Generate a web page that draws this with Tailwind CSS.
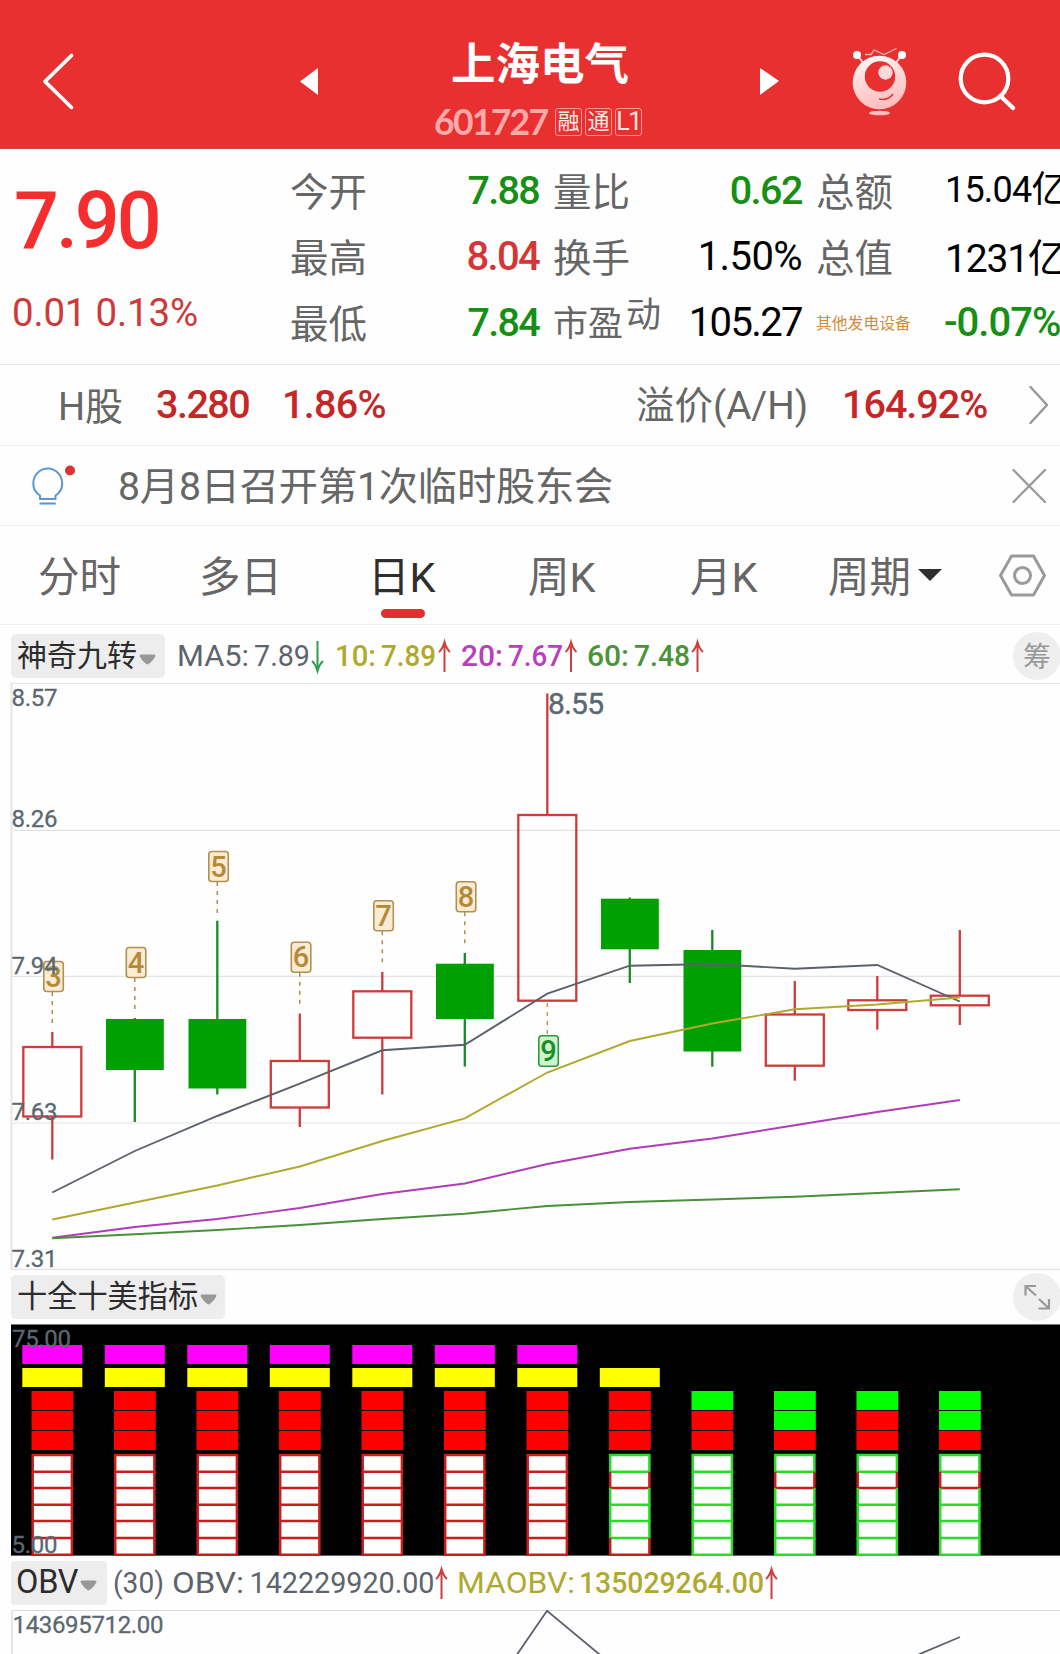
<!DOCTYPE html>
<html lang="zh-CN">
<head>
<meta charset="utf-8">
<title>上海电气 601727</title>
<script src="https://cdn.jsdelivr.net/npm/@tailwindcss/browser@4"></script>
</head>
<body class="w-[1060px] h-[1654px] overflow-hidden bg-[#fefefe] font-[Roboto,'Noto_Sans_CJK_SC',sans-serif] leading-none whitespace-nowrap text-[#666]">

<!-- Header -->
<header class="flex h-[149px] bg-[#e83030] border-b border-[#c04a4a] text-white">
  <svg class="w-[434px] h-[148px] shrink-0" viewBox="0 0 434 148" fill="none">
    <path d="M71.5 55.500L45 81.500L71.500 107.500" stroke="#fff" stroke-width="3.800" stroke-linecap="round" stroke-linejoin="round"/>
    <path d="M300 81.500L318 68V95Z" fill="#fff"/>
  </svg>
  <div class="w-[210px] flex flex-col pt-[43px]">
    <h1 class="text-[44.500px] font-bold ml-[17px]">上海电气</h1>
    <div class="flex items-center mt-[20px] h-[28px]">
      <span class="w-[121px] font-[Lato] font-bold text-[35.500px] tracking-[-1.7px] text-[#ffa9a9]">601727</span>
      <div class="flex gap-[3px] text-[22px] text-[#ffe6e6]">
        <span class="w-[27px] h-[28px] border border-[#f79a9a] rounded-[3px] flex items-center justify-center pt-[1px]">融</span>
        <span class="w-[27px] h-[28px] border border-[#f79a9a] rounded-[3px] flex items-center justify-center pt-[1px]">通</span>
        <span class="w-[27px] h-[28px] border border-[#f79a9a] rounded-[3px] flex items-center justify-center text-[25px] tracking-[-1.5px]">L1</span>
      </div>
    </div>
  </div>
  <svg class="w-[416px] h-[148px] shrink-0" viewBox="644 0 416 148" fill="none">
    <defs><linearGradient id="body" x1="0" y1="0" x2="0.300" y2="1"><stop offset="0" stop-color="#fff"/><stop offset="0.450" stop-color="#ffdcdc"/><stop offset="1" stop-color="#ffc0c0"/></linearGradient></defs>
    <path d="M760 68L779 81L760 95Z" fill="#fff"/>
    <path d="M858 56L864 64M901 56L895 64" stroke="#ffdede" stroke-width="2"/>
    <circle cx="857" cy="55" r="4" fill="#fff"/><circle cx="902" cy="55" r="4" fill="#fff"/>
    <path d="M865 54.500H871L874 50L884 54.500L896.500 48.500" stroke="#ffb5b5" stroke-width="1.300"/>
    <circle cx="879.500" cy="82.500" r="26.800" fill="url(#body)"/>
    <circle cx="880" cy="76.500" r="15.200" fill="#e83030"/>
    <circle cx="885.500" cy="72.500" r="7.200" fill="#ffd9d9"/>
    <path d="M879 99Q888 101 893 94" stroke="#e83030" stroke-width="1.500"/>
    <ellipse cx="879.500" cy="113" rx="10.500" ry="2.300" fill="#ffbcbc"/>
    <circle cx="984.500" cy="78.500" r="23.800" stroke="#fff" stroke-width="4.200"/>
    <path d="M1000.500 96L1013 108" stroke="#fff" stroke-width="4.500" stroke-linecap="round"/>
  </svg>
</header>

<!-- Quote -->
<section class="flex h-[216px] border-b border-[#e9e9e9]">
  <div class="w-[290px] pt-[33px] pl-[14px]">
    <div class="text-[79px] font-medium tracking-[-3px] text-[#f52d2d]">7.90</div>
    <div class="text-[38.500px] text-[#cd3a3a] mt-[33px] -ml-[2px] tracking-[-0.2px]">0.01 0.13%</div>
  </div>
  <div class="grid grid-cols-[249px_249px_244px] grid-rows-[66px_66px_66px] gap-x-[14px] pt-[9px] text-[39px]">
    <div class="flex items-center justify-between"><span class="pt-[4px] text-[38.500px]">今开</span><span class="text-[39.500px] font-medium tracking-[-1.7px]  text-[#159015]">7.88</span></div>
    <div class="flex items-center justify-between"><span class="pt-[4px] text-[38.500px]">量比</span><span class="text-[39.500px] font-medium tracking-[-1.5px] text-[#159015]">0.62</span></div>
    <div class="flex items-center"><span class="pt-[4px] text-[38.500px] w-[129px] shrink-0">总额</span><span class="text-[36px] tracking-[-0.8px] text-black pb-[3px]">15.04亿</span></div>
    <div class="flex items-center justify-between"><span class="pt-[4px] text-[38.500px]">最高</span><span class="text-[40px] font-medium tracking-[-1.7px] text-[#d53535]">8.04</span></div>
    <div class="flex items-center justify-between"><span class="pt-[4px] text-[38.500px]">换手</span><span class="text-[40px] tracking-[-0.6px] text-black">1.50%</span></div>
    <div class="flex items-center"><span class="pt-[4px] text-[38.500px] w-[129px] shrink-0">总值</span><span class="text-[39px] tracking-[-1.2px] text-black pt-[4px]">1231亿</span></div>
    <div class="flex items-center justify-between"><span class="pt-[4px] text-[38.500px]">最低</span><span class="text-[39.500px] font-medium tracking-[-1.7px] text-[#159015]">7.84</span></div>
    <div class="flex items-center justify-between"><span class="flex text-[35px] pt-[2px]"><span>市盈</span><span class="-mt-[9px] ml-[3px]">动</span></span><span class="text-[40px] tracking-[-1.6px] text-black">105.27</span></div>
    <div class="flex items-center"><span class="text-[15.800px] w-[128px] shrink-0 pt-[2px] text-[#d48a35]">其他发电设备</span><span class="text-[40px] font-medium tracking-[-1px] text-[#159015]">-0.07%</span></div>
  </div>
</section>

<!-- H share -->
<section class="flex items-center h-[81px] border-b border-[#eee] pl-[58px] text-[38px]">
  <span class="w-[98px] pt-[3px]">H股</span>
  <span class="w-[126px] text-[39.500px] font-medium tracking-[-1.500px] text-[#c62626]">3.280</span>
  <span class="w-[354px] text-[39.500px] font-medium tracking-[-0.700px] text-[#c62626]">1.86%</span>
  <span class="w-[206px] pt-[3px] text-[38.500px]">溢价(A/H)</span>
  <span class="w-[185px] text-[39.500px] font-medium tracking-[-1px] text-[#c62626]">164.92%</span>
  <svg class="w-[24px] h-[40px]" viewBox="0 0 24 40" fill="none"><path d="M3.500 2L20 20L3.500 38" stroke="#999" stroke-width="2.500" stroke-linecap="round" stroke-linejoin="round"/></svg>
</section>

<!-- Notice -->
<section class="flex items-center h-[80px] border-b border-[#eee]">
  <svg class="w-[118px] h-[80px]" viewBox="0 0 118 80" fill="none">
    <path d="M40 53V49.500L38 48C35 45.500 33.300 41.500 33.300 37.500A14.400 15 0 0 1 62.200 37.500C62.200 41.500 60.500 45.500 57.500 48L55.500 49.500V53Z" stroke="#5b95d2" stroke-width="2" stroke-linejoin="round"/>
    <path d="M39.500 57.500H55.800" stroke="#5b95d2" stroke-width="2"/>
    <circle cx="70" cy="24.500" r="5" fill="#d93434"/>
  </svg>
  <span class="w-[893px] pt-[5px] text-[39.200px] tracking-[-0.150px]">8月8日召开第1次临时股东会</span>
  <svg class="w-[36px] h-[36px]" viewBox="0 0 36 36" fill="none"><path d="M2.500 2L34 34M34 2L2.500 34" stroke="#999" stroke-width="2.300" stroke-linecap="round"/></svg>
</section>

<!-- Period tabs -->
<nav class="flex h-[99px] border-b border-[#eee] text-[41.500px] pt-[31px]">
  <span class="w-[161px] pl-[38px]">分时</span>
  <span class="w-[166px] pl-[38px]">多日</span>
  <span class="w-[201px] pl-[41px] text-[#2e2e2e] flex flex-col">日K<i class="block w-[44px] h-[9px] rounded-full bg-[#e03131] mt-[10px] ml-[13px]"></i></span>
  <span class="w-[162px]">周K</span>
  <span class="w-[138px]">月K</span>
  <span class="flex w-[167px]">周期<svg class="w-[26px] h-[12px] ml-[6px] mt-[12px]" viewBox="0 0 26 12"><path d="M1 0H25L13 12Z" fill="#2e2e2e"/></svg></span>
  <svg class="w-[52px] h-[48px] -mt-[5px]" viewBox="0 0 52 48" fill="none" stroke="#9a9a9a" stroke-width="3" stroke-linejoin="round"><path d="M16.500 4H38.500L49.500 23.500L38.500 43H16.500L5.500 23.500Z"/><circle cx="27.500" cy="23.500" r="8"/></svg>
</nav>

<!-- Moving averages legend -->
<section class="flex items-center h-[58px] pl-[11px] pt-[4px] text-[30px]">
  <span class="flex items-center w-[154px] h-[44px] bg-[#ededed] rounded-[5px] pl-[6px] text-[#2c2c2c]"><span>神奇九转</span><svg class="w-[17px] h-[11px] ml-[2px] mt-[6px]" viewBox="0 0 17 11"><path d="M0.500 2Q0.500 0.500 2 0.500H15Q16.500 0.500 16.500 2Q13 8.500 8.500 10.500Q4 8.500 0.500 2Z" fill="#989898"/></svg></span>
  <span id="ma" class="flex"></span>
  <span class="flex items-center justify-center w-[48px] h-[48px] rounded-full bg-[#efefef] text-[#999] text-[28px] ml-auto -mr-[1px] pt-[3px]">筹</span>
</section>

<!-- Candles -->
<svg id="kline" class="block w-[1060px] h-[587px]" viewBox="0 683 1060 587" font-family="Roboto"></svg>

<section class="flex items-center h-[54px] pl-[11px] text-[30.200px]">
  <span class="flex items-center w-[214px] h-[44px] bg-[#ededed] rounded-[5px] pl-[6px] text-[#2c2c2c]"><span>十全十美指标</span><svg class="w-[17px] h-[11px] ml-[2px] mt-[5px]" viewBox="0 0 17 11"><path d="M0.500 2Q0.500 0.500 2 0.500H15Q16.500 0.500 16.500 2Q13 8.500 8.500 10.500Q4 8.500 0.500 2Z" fill="#989898"/></svg></span>
  <span class="flex items-center justify-center w-[48px] h-[48px] rounded-full bg-[#efefef] ml-auto -mr-[1px]"><svg class="w-[28px] h-[26px]" viewBox="0 0 28 26" fill="none" stroke="#999" stroke-width="2.200"><path d="M2.500 11.500V2H13M3 2.500L13 11.500M26 15V24.500H15.500M25.500 24L16 15"/></svg></span>
</section>

<!-- Signal blocks -->
<svg id="signal" class="block w-[1060px] h-[232px]" viewBox="0 1324 1060 232" font-family="Roboto"></svg>

<section class="flex items-center h-[54px] pl-[11px] text-[30.500px]">
  <span class="flex items-center w-[96px] h-[44px] bg-[#ededed] pl-[5px] rounded-[4px] text-[32.500px] text-[#2c2c2c]"><span class="tracking-[-0.2px] pb-[2px]">OBV</span><svg class="w-[17px] h-[11px] ml-[2px] mt-[5px]" viewBox="0 0 17 11"><path d="M0.500 2Q0.500 0.500 2 0.500H15Q16.500 0.500 16.500 2Q13 8.500 8.500 10.500Q4 8.500 0.500 2Z" fill="#989898"/></svg></span>
  <span id="obvtext" class="flex"></span>
</section>

<svg class="block w-[1060px] h-[44px]" viewBox="0 1610 1060 44" fill="none" font-family="Roboto">
  <path d="M11 1610.500H1060" stroke="#d9d9d9"/><path d="M12 1610V1654" stroke="#e6e6e6" stroke-width="2"/>
  <path d="M516 1656L547 1610.800L602 1656.500M915 1656L960 1637" stroke="#5b616b" stroke-width="1.800"/>
  <text x="12.500" y="1632.500" font-size="24" fill="#5a6872" stroke="#5a6872" stroke-width="0.300" textLength="151">143695712.00</text>
</svg>

<script>
function legend(id, x0, width, items) {
  const t = items.map(i => i.arrow
    ? `<path d="${i.arrow === 'up' ? 'M0 31V1M-5.500 11Q-2 8 0 1Q2 8 5.500 11' : 'M0 0V30M-5.500 20Q-2 23 0 30Q2 23 5.500 20'}" transform="translate(${i.x} 7)" fill="none" stroke="${i.arrow === 'up' ? '#cc4040' : '#2f9d50'}" stroke-width="2"/>`
    : `<text x="${i.x}" y="32" fill="${i.c}" font-weight="${i.w || 400}" textLength="${i.l}" lengthAdjust="spacingAndGlyphs">${i.t}</text>`).join('');
  document.getElementById(id).innerHTML = `<svg width="${width}" height="44" viewBox="${x0} 0 ${width} 44" font-family="Roboto" font-size="30">${t}</svg>`;
}
const G = '#5d646d', Y = '#b1a92e', P = '#b83fbe', N = '#4b9338';
legend('ma', 165, 560, [
  {x:177,l:72,t:'MA5:',c:G},{x:254,l:56,t:'7.89',c:G},{x:317.5,arrow:'down'},
  {x:335,l:41,t:'10:',c:Y,w:500},{x:381,l:55,t:'7.89',c:Y,w:500},{x:444.5,arrow:'up'},
  {x:461,l:42,t:'20:',c:P,w:500},{x:508,l:55,t:'7.67',c:P,w:500},{x:571,arrow:'up'},
  {x:587,l:42,t:'60:',c:N,w:500},{x:634,l:56,t:'7.48',c:N,w:500},{x:697.5,arrow:'up'}]);
legend('obvtext', 107, 700, [
  {x:113,l:51,t:'(30)',c:G},{x:172,l:72,t:'OBV:',c:G},{x:249.5,l:185,t:'142229920.00',c:G},{x:441.5,arrow:'up'},
  {x:457,l:118,t:'MAOBV:',c:Y},{x:579,l:185,t:'135029264.00',c:Y,w:500},{x:771.5,arrow:'up'}]);

const cx = i => 52.300 + i * 82.500;
const rect = (x, y, w, h, a) => `<rect x="${x}" y="${y}" width="${w}" height="${h}" ${a}/>`;
const line = (x1, y1, x2, y2, a) => `<path d="M${x1} ${y1}L${x2} ${y2}" ${a}/>`;

// [direction, body top, body bottom, wick top, wick bottom]
const candles = [
  ['r',1046,1117.5,1032,1159.5],['g',1019,1070,1018,1122],['g',1019,1088.5,920.7,1094.5],
  ['r',1060,1108.5,1013.5,1127],['r',990.3,1038.7,972,1094.5],['g',963.7,1019,953,1066.5],
  ['r',814,1001.7,693.5,1001],['g',898.7,949.3,897.5,983],['g',950,1051.5,930,1066.7],
  ['r',1013.5,1066.7,981,1080.7],['r',999.3,1011,976,1029.7],['r',994.7,1006.3,930,1025]];
const averages = [
  ['#5b616b',[1192.5,1151,1116,1083.7,1050.3,1044.7,993.7,965.7,964,968.7,965,1001.5]],
  ['#b1a92e',[1219.5,1202.5,1185.5,1166.5,1141,1118.3,1072.5,1041,1023.5,1009.3,1004.5,997.5]],
  ['#b03cb6',[1237.7,1227,1219,1208,1194,1183.5,1164,1148.7,1138.5,1125.3,1112,1100]],
  ['#4a8f3a',[1238.3,1234.3,1230,1225,1219,1213.7,1206,1202,1199.5,1196.7,1193,1189.3]]];
const marks = [[3,961],[4,947],[5,851],[6,941.7],[7,900.3],[8,881.3]];

let s = '';
[683.5, 830.3, 976.3, 1123, 1269.3].forEach(y => s += line(11, y, 1060, y, 'stroke="#e3e3e3" stroke-width="1.200"'));
s += line(11.5, 683, 11.5, 1270, 'stroke="#e6e6e6" stroke-width="2"');
candles.forEach(([d, t, b, wt, wb], i) => {
  const x = cx(i), c = d === 'r' ? '#cf3b3b' : '#1c8a24';
  s += line(x, wt, x, d === 'r' ? t + 1 : wb, `stroke="${c}" stroke-width="2.300"`);
  if (d === 'r') {
    s += line(x, b - 1, x, wb, `stroke="${c}" stroke-width="2.300"`);
    s += rect(x - 29, t + 1, 58, b - t - 2, `fill="none" stroke="${c}" stroke-width="2.300"`);
  } else s += rect(x - 28.8, t, 57.8, b - t, 'fill="#00a000"');
});
averages.forEach(([c, ys]) => s += `<polyline points="${ys.map((y, i) => cx(i) + ',' + y).join(' ')}" fill="none" stroke="${c}" stroke-width="1.900"/>`);
marks.forEach(([n, y], i) => {
  s += line(cx(i), y + 31, cx(i), candles[i][3] - 5, 'stroke="#b08f45" stroke-width="1.500" stroke-dasharray="4 5"');
  s += rect(cx(i) - 8.5, y + .5, 19.5, 30, 'rx="3" fill="#faecd3" stroke="#b2904f" stroke-width="1.600"');
  s += `<text x="${cx(i) + 1.3}" y="${y + 25.5}" font-size="29" font-weight="500" text-anchor="middle" fill="#b5893a">${n}</text>`;
});
s += line(547.3, 1003, 547.3, 1035, 'stroke="#c29a45" stroke-width="1.500" stroke-dasharray="4 5"');
s += rect(538.8, 1035.8, 19.5, 30.5, 'rx="3" fill="#cdf3d0" stroke="#2f9a3d" stroke-width="1.600"');
s += '<text x="548.600" y="1061" font-size="29" font-weight="500" text-anchor="middle" fill="#1a8f26">9</text>';
[['8.57',705.7],['8.26',826.7],['7.94',974],['7.63',1120],['7.31',1267]].forEach(([t, y]) =>
  s += `<text x="11.500" y="${y}" font-size="24" fill="#5a6872" stroke="#5a6872" stroke-width="0.300" textLength="46">${t}</text>`);
s += '<text x="548" y="714" font-size="30" fill="#5a6872" stroke="#5a6872" stroke-width="0.400" textLength="56">8.55</text>';
document.getElementById('kline').innerHTML = s;

// Signal columns: pink, yellow, three solid blocks, six outlined blocks (r = red, g = green)
const cols = [...Array(7).fill([1,1,'rrr','rrrrrr']),[0,1,'rrr','grgggr'],[0,0,'grr','gggggg'],[0,0,'ggr','grgggg'],[0,0,'grr','grgggg'],[0,0,'ggr','grgggg']];
let q = rect(11, 1324, 1049, 232, 'fill="#000"') + line(11, 1324.5, 1060, 1324.5, 'stroke="#777"') + line(11, 1555.5, 1060, 1555.5, 'stroke="#666"');
const ys = [1455, 1471.7, 1488, 1504.7, 1521, 1538, 1554.8];
cols.forEach(([p, y, solid, open], i) => {
  const x = cx(i);
  if (p) q += rect(x - 30, 1345, 60, 19, 'fill="#ff00ff"');
  if (y) q += rect(x - 30, 1368, 60, 19, 'fill="#ffff00"');
  [...solid].forEach((c, k) => q += rect(x - 20.8, 1391 + k * 20, 41.8, 19, `fill="${c === 'r' ? '#ff0000' : '#00ff00'}"`));
  q += rect(x - 20, 1455, 40, 100, 'fill="#fff"');
  [...open].forEach((c, k) => {
    const a = `stroke="${c === 'r' ? '#cc1c1c' : '#28dc28'}" stroke-width="2.500" fill="none"`;
    q += `<path d="M${x - 19.6} ${ys[k]}V${ys[k + 1]}H${x + 19.6}V${ys[k]}${k === 0 ? 'Z' : ''}" ${a}/>`;
  });
});
q += '<g fill="#5a6872" stroke="#5a6872" stroke-width="0.300" font-size="24"><text x="12" y="1346.700" textLength="59">75.00</text><text x="11.500" y="1552.500" textLength="46">5.00</text></g>';
document.getElementById('signal').innerHTML = q;
</script>
</body>
</html>
